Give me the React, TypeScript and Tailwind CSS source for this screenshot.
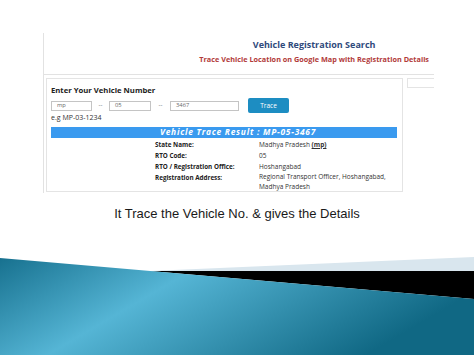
import React from 'react';

const rows: { label: string; value: React.ReactNode }[] = [
  {
    label: 'State Name:',
    value: (
      <>
        Madhya Pradesh <span className="font-bold underline">(mp)</span>
      </>
    ),
  },
  { label: 'RTO Code:', value: '05' },
  { label: 'RTO / Registration Office:', value: 'Hoshangabad' },
  {
    label: 'Registration Address:',
    value: (
      <span className="block leading-[10px]">
        Regional Transport Officer, Hoshangabad,
        <br />
        Madhya Pradesh
      </span>
    ),
  },
];

const Field: React.FC<{ value: string; width: string }> = ({ value, width }) => (
  <div className={`${width} flex h-[10px] items-center border border-[#c4c4c4] bg-white pl-[5px] text-[5.8px] text-[#666]`}>
    {value}
  </div>
);

const Sep: React.FC<{ width: string }> = ({ width }) => (
  <span className={`${width} text-center text-[6px] text-[#555]`}>--</span>
);

export default function App() {
  return (
    <div className="relative flex h-[355px] w-[474px] flex-col overflow-hidden bg-white font-['Open_Sans',sans-serif]">
      {/* Screenshot of the search page */}
      <div className="pl-[43px] pt-[33px]">
        <div className="h-[160px] w-[391px] overflow-hidden border-l border-[#e2e2e2]">
          {/* Header */}
          <div className="flex h-[42px] flex-col items-end border-b border-[#e2e2e2] pr-[5px] pt-[6px]">
            <div className="flex flex-col items-center">
              <div className="text-[9px] font-bold leading-[12px] text-[#2f4a7c]">
                Vehicle Registration Search
              </div>
              <div className="mt-[3px] text-[7.3px] font-bold leading-[10px] text-[#b23b3b]">
                Trace Vehicle Location on Google Map with Registration Details
              </div>
            </div>
          </div>

          <div className="ml-[2px] mt-[3px] flex gap-[4px]">
            {/* Main box */}
            <div className="h-[114px] w-[357px] shrink-0 border border-[#e4e4e4] pl-[4px] pr-[5px] pt-[6px]">
              <div className="text-[7.7px] font-bold leading-[10px] text-[#222]">
                Enter Your Vehicle Number
              </div>
              <div className="mt-[3px] flex h-[15px] items-center">
                <Field value="mp" width="w-[41px]" />
                <Sep width="w-[17px]" />
                <Field value="05" width="w-[42px]" />
                <Sep width="w-[19px]" />
                <Field value="3467" width="w-[69px]" />
                <button className="ml-[9px] flex h-[15px] w-[41px] items-center justify-center rounded-[2px] bg-[#1d8dc2] text-[6.5px] text-white">
                  Trace
                </button>
              </div>
              <div className="text-[7px] leading-[10px] text-[#333]">e.g MP-03-1234</div>
              <div className="mt-[4px] flex h-[11px] items-center bg-[#3a9aef] pl-[109px] text-[8.4px] font-bold italic tracking-[0.75px] text-white">
                Vehicle Trace Result : MP-05-3467
              </div>
              <div className="grid grid-cols-[104px_1fr] pl-[104px] pt-[1px] text-[6.5px] leading-[11px] text-[#333]">
                {rows.map((r) => (
                  <React.Fragment key={r.label}>
                    <div className="text-[6.3px] font-bold text-[#222]">{r.label}</div>
                    <div>{r.value}</div>
                  </React.Fragment>
                ))}
              </div>
            </div>
            {/* Side box */}
            <div className="h-[10px] w-[40px] shrink-0 border border-[#e4e4e4]" />
          </div>
        </div>
      </div>

      {/* Caption */}
      <div className="mt-[13px] text-center font-['Liberation_Sans',Arial,sans-serif] text-[13px] leading-[16px] text-[#1a1a1a]">
        It Trace the Vehicle No. &amp; gives the Details
      </div>

      {/* Slide footer decoration */}
      <svg className="mt-auto block" width="474" height="100" viewBox="0 0 474 100">
        <defs>
          <linearGradient id="teal" x1="0" y1="0" x2="1" y2="0.35">
            <stop offset="0" stopColor="#17718f" />
            <stop offset="0.4" stopColor="#55b5d5" />
            <stop offset="1" stopColor="#106884" />
          </linearGradient>
        </defs>
        <polygon points="150,16 474,2 474,16" fill="#d9e6ee" />
        <polygon points="150,16 474,16 474,44" fill="#000" />
        <polygon points="0,3 474,44 474,100 0,100" fill="url(#teal)" />
      </svg>
    </div>
  );
}
